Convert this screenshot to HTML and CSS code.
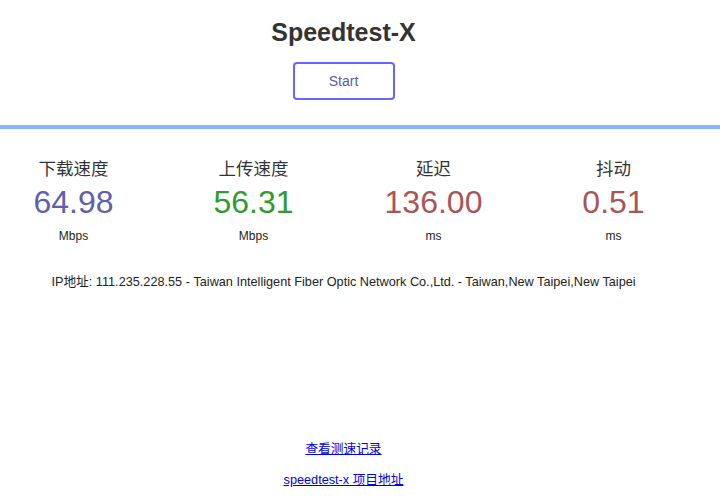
FILE: index.html
```html
<!DOCTYPE html>
<html lang="zh-CN">
<head>
    <meta charset="UTF-8">
    <meta name="viewport" content="width=device-width, initial-scale=1.0">
    <title>Speedtest-X</title>
    <link rel="stylesheet" href="styles.css">
</head>
<body>
    <div class="header">
        <div class="wrap">
            <h1>Speedtest-X</h1>
            <button class="start-btn" id="startBtn">Start</button>
        </div>
    </div>

    <div class="main wrap">
        <div class="results">
            <div class="result-item">
                <div class="result-label">下载速度</div>
                <div class="result-value dl">64.98</div>
                <div class="result-unit">Mbps</div>
            </div>
            <div class="result-item">
                <div class="result-label">上传速度</div>
                <div class="result-value ul">56.31</div>
                <div class="result-unit">Mbps</div>
            </div>
            <div class="result-item">
                <div class="result-label">延迟</div>
                <div class="result-value ping">136.00</div>
                <div class="result-unit">ms</div>
            </div>
            <div class="result-item">
                <div class="result-label">抖动</div>
                <div class="result-value ping">0.51</div>
                <div class="result-unit">ms</div>
            </div>
        </div>

        <div class="ip-info">IP地址: 111.235.228.55 - Taiwan Intelligent Fiber Optic Network Co.,Ltd. - Taiwan,New Taipei,New Taipei</div>

        <div class="footer">
            <a href="#">查看测速记录</a>
            <a href="#">speedtest-x 项目地址</a>
        </div>
    </div>
</body>
</html>
```

FILE: styles.css
```css
* {
    margin: 0;
    padding: 0;
    box-sizing: border-box;
}

body {
    font-family: "Liberation Sans", Arial, "Noto Sans CJK SC", sans-serif;
    background-color: #fff;
    color: #222;
    height: 503px;
    display: flex;
    flex-direction: column;
}

.wrap {
    width: 687px;
}

.header {
    text-align: center;
    padding-top: 18px;
    padding-bottom: 25px;
    border-bottom: 4px solid #8ab4ff;
}

.header h1 {
    font-size: 25px;
    color: #333;
    line-height: 29px;
    margin-bottom: 15px;
}

.start-btn {
    width: 102px;
    height: 38px;
    background: #fff;
    border: 2px solid #6666ff;
    border-radius: 4px;
    color: #5a5aaa;
    font-family: inherit;
    font-size: 14px;
    cursor: pointer;
}

.main {
    flex: 1;
    display: flex;
    flex-direction: column;
}

.results {
    display: grid;
    grid-template-columns: repeat(4, 144px);
    column-gap: 36px;
    justify-content: center;
    padding-top: 28px;
}

.result-item {
    text-align: center;
}

.result-label {
    font-size: 17.5px;
    line-height: 24px;
    color: #333;
}

.result-value {
    font-size: 32px;
    line-height: 42px;
}

.result-value.dl {
    color: #6060aa;
}

.result-value.ul {
    color: #2f9a2f;
}

.result-value.ping {
    color: #aa5555;
}

.result-unit {
    font-size: 12px;
    line-height: 16px;
    margin-top: 5px;
}

.ip-info {
    font-size: 12.7px;
    text-align: center;
    margin-top: 27px;
}

.footer {
    margin-top: auto;
    padding-bottom: 15px;
    display: flex;
    flex-direction: column;
    align-items: center;
    gap: 12px;
    font-size: 12.7px;
}

.footer a {
    color: #00e;
}
```
